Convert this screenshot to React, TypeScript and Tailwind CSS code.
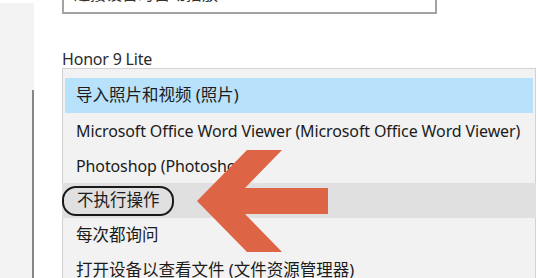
import React from "react";

const rows = [
  { label: "导入照片和视频 (照片)", cjk: true },
  { label: "Microsoft Office Word Viewer (Microsoft Office Word Viewer)", cjk: false },
  { label: "Photoshop (Photoshop)", cjk: false },
  { label: "不执行操作", cjk: true },
  { label: "每次都询问", cjk: true },
  { label: "打开设备以查看文件 (文件资源管理器)", cjk: true },
];

function Arrow() {
  return (
    <svg
      className="absolute left-0 top-0 pointer-events-none"
      width="538"
      height="278"
      viewBox="0 0 538 278"
    >
      <polygon
        fill="#dd6444"
        points="197,201 247,150 282,150 245,188 328,188 328,214 245,214 282,252 247,252"
      />
    </svg>
  );
}

export default function App() {
  return (
    <div
      className="relative w-[538px] h-[278px] overflow-hidden bg-white flex text-[#1b1b1b]"
      style={{ fontFamily: '"Noto Sans", "Noto Sans CJK SC", sans-serif' }}
    >
      {/* left rail */}
      <div className="w-[32px] pt-[3px] flex flex-col">
        <div className="flex-1 bg-[#f3f3f3]" />
      </div>
      <div className="w-[2px] pt-[3px] flex flex-col">
        <div className="h-[87px] shrink-0 bg-[#f3f3f3]" />
        <div className="flex-1 bg-[#858585]" />
      </div>

      <div className="ml-[28px] w-[474px] flex flex-col">
        {/* top input, mostly scrolled out */}
        <div className="shrink-0 w-[375px] h-[14px] border-2 border-t-0 border-[#a3a3a3] overflow-hidden">
          <div className="-mt-[17px] pl-[10px] text-[16px] leading-[22px] text-[#333]">
            连接设备时自动播放
          </div>
        </div>

        <div className="shrink-0 mt-[35px] text-[16px] leading-[20px] text-[#2b2b2b] tracking-[-0.2px]">
          Honor 9 Lite
        </div>

        <div className="shrink-0 mt-[-1px] border border-[#d2d2d2] bg-[#f2f2f2] pt-[9px] px-[2px] h-[220px]">
          {rows.map(({ label, cjk }, i) => {
            const selected = i === 0;
            const current = i === 3;
            return (
              <div
                key={label}
                className={`h-[35px] flex items-center whitespace-nowrap ${
                  cjk ? "text-[16.5px]" : "text-[16px] tracking-[-0.12px]"
                } ${selected ? "bg-[#b8e1fb]" : current ? "bg-[#e0e0e0] -mx-[3px]" : ""}`}
              >
                {current ? (
                  <span className="h-[30px] flex items-center pl-[13px] pr-[12px] rounded-[14px] border-2 border-[#1a1a1a]">
                    {label}
                  </span>
                ) : (
                  <span className="pl-[11px]">{label}</span>
                )}
              </div>
            );
          })}
        </div>
      </div>

      <Arrow />
    </div>
  );
}
